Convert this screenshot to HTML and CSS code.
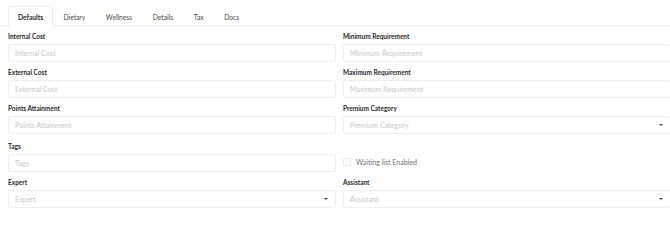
FILE: index.html
```html
<!DOCTYPE html>
<html lang="en">
<head>
<meta charset="utf-8">
<title>Defaults</title>
<link rel="stylesheet" href="styles.css">
</head>
<body>
<div class="page">
  <nav class="tabs">
    <span class="tab active">Defaults</span>
    <span class="tab">Dietary</span>
    <span class="tab">Wellness</span>
    <span class="tab">Details</span>
    <span class="tab">Tax</span>
    <span class="tab">Docs</span>
  </nav>
  <form class="form">
    <div class="field">
      <label class="label">Internal Cost</label>
      <input class="input" type="text" placeholder="Internal Cost">
    </div>
    <div class="field">
      <label class="label">Minimum Requirement</label>
      <input class="input" type="text" placeholder="Minimum Requirement">
    </div>
    <div class="field">
      <label class="label">External Cost</label>
      <input class="input" type="text" placeholder="External Cost">
    </div>
    <div class="field">
      <label class="label">Maximum Requirement</label>
      <input class="input" type="text" placeholder="Maximum Requirement">
    </div>
    <div class="field">
      <label class="label">Points Attainment</label>
      <input class="input" type="text" placeholder="Points Attainment">
    </div>
    <div class="field">
      <label class="label">Premium Category</label>
      <div class="select"><span class="placeholder">Premium Category</span><span class="caret"></span></div>
    </div>
    <div class="field shifted">
      <label class="label">Tags</label>
      <input class="input" type="text" placeholder="Tags">
    </div>
    <div class="field check-field">
      <span class="checkbox"></span>
      <span class="check-label">Waiting list Enabled</span>
    </div>
    <div class="field">
      <label class="label">Expert</label>
      <div class="select"><span class="placeholder">Expert</span><span class="caret"></span></div>
    </div>
    <div class="field">
      <label class="label">Assistant</label>
      <div class="select"><span class="placeholder">Assistant</span><span class="caret"></span></div>
    </div>
  </form>
</div>
</body>
</html>
```

FILE: styles.css
```css
html, body {
  margin: 0;
  padding: 0;
  overflow: hidden;
  background: #ffffff;
}

body {
  font-family: Lato, "Open Sans", sans-serif;
  color: #333333;
}

.page {
  width: 663px;
  padding: 6px 0 0 8px;
}

.tabs {
  display: flex;
  height: 20px;
  border-bottom: 1px solid #ededed;
  box-sizing: border-box;
  width: 671px;
  margin-left: -8px;
  padding-left: 8px;
}

.tab {
  display: flex;
  align-items: center;
  padding: 0 9.3px;
  font-size: 6.7px;
  color: #4a4a4a;
  height: 20px;
  box-sizing: border-box;
  border: 1px solid transparent;
  border-bottom: none;
}

.tab.active {
  font-weight: 700;
  color: #2b2b2b;
  background: #ffffff;
  border-color: #ededed;
  border-radius: 2px 2px 0 0;
  height: 21px;
  margin-bottom: -1px;
  padding: 0 9px;
}

.form {
  display: grid;
  grid-template-columns: 328px 328px;
  column-gap: 7px;
  row-gap: 7px;
  margin-top: 7px;
}

.field {
  display: flex;
  flex-direction: column;
}

.field.shifted {
  margin-top: 2px;
}

.label {
  display: block;
  font-size: 6.5px;
  line-height: 8px;
  font-weight: 700;
  color: #2a2a2a;
  margin-bottom: 3px;
}

.input,
.select {
  height: 18px;
  box-sizing: border-box;
  border: 1px solid #eeeeee;
  border-radius: 3px;
  padding: 0 6px;
  font-family: Lato, "Open Sans", sans-serif;
  font-size: 7.2px;
  color: #333333;
  background: #ffffff;
  outline: none;
  width: 100%;
  margin: 0;
}

.input::placeholder {
  color: #c8c8c8;
}

.select {
  display: flex;
  align-items: center;
  justify-content: space-between;
  padding-right: 7px;
}

.placeholder {
  color: #c8c8c8;
}

.caret {
  width: 0;
  height: 0;
  border-left: 2px solid transparent;
  border-right: 2px solid transparent;
  border-top: 2.5px solid #4a4a4a;
}

.check-field {
  flex-direction: row;
  align-items: center;
  padding-top: 11px;
}

.checkbox {
  width: 8px;
  height: 8px;
  box-sizing: border-box;
  border: 1px solid #e8e8e8;
  border-radius: 1px;
  margin-right: 5px;
}

.check-label {
  font-size: 7px;
  color: #707070;
}
```
